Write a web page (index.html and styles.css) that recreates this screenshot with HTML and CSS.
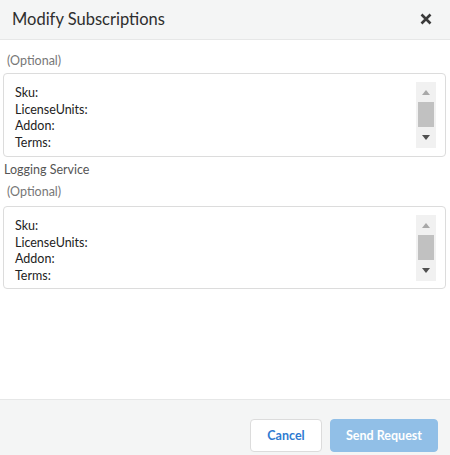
FILE: index.html
```html
<!DOCTYPE html>
<html>
<head>
<meta charset="utf-8">
<link rel="stylesheet" href="styles.css">
</head>
<body>
<div class="dialog">
  <div class="header">
    <div class="title">Modify Subscriptions</div>
    <svg class="close" width="12" height="12" viewBox="0 0 12 12"><path d="M1.5 1.5L10.5 10.5M10.5 1.5L1.5 10.5" stroke="#3a3a3a" stroke-width="2.6" stroke-linecap="butt"/></svg>
  </div>
  <div class="content">
    <div class="optional first">(Optional)</div>
    <div class="box">
      <div class="lines">
        <div>Sku:</div>
        <div>LicenseUnits:</div>
        <div>Addon:</div>
        <div>Terms:</div>
      </div>
      <div class="scrollbar">
        <div class="arrow up"></div>
        <div class="thumb"></div>
        <div class="arrow down"></div>
      </div>
    </div>
    <div class="section-label">Logging Service</div>
    <div class="optional second">(Optional)</div>
    <div class="box box2">
      <div class="lines">
        <div>Sku:</div>
        <div>LicenseUnits:</div>
        <div>Addon:</div>
        <div>Terms:</div>
      </div>
      <div class="scrollbar">
        <div class="arrow up"></div>
        <div class="thumb"></div>
        <div class="arrow down"></div>
      </div>
    </div>
  </div>
  <div class="footer">
    <button class="btn cancel">Cancel</button>
    <button class="btn send">Send Request</button>
  </div>
</div>
</body>
</html>
```

FILE: styles.css
```css
html, body {
  margin: 0;
  padding: 0;
}
body {
  font-family: Lato, "Open Sans", "Liberation Sans", sans-serif;
  color: #333;
  background: #fff;
}
.dialog {
  width: 450px;
  height: 455px;
  display: flex;
  flex-direction: column;
  overflow: hidden;
}
.header {
  height: 39px;
  flex: none;
  background: #f4f5f5;
  border-bottom: 1px solid #e6e7e7;
  display: flex;
  align-items: center;
  justify-content: space-between;
  padding: 0 18px 0 12px;
  box-sizing: content-box;
}
.title {
  font-size: 16.5px;
  color: #2e2e2e;
  margin-top: -2px;
}
.close {
  display: block;
  margin-top: -1px;
}
.content {
  flex: 1;
  padding: 0 4px 0 3px;
}
.optional {
  font-size: 12.5px;
  line-height: 18px;
  color: #777;
  padding-left: 4px;
}
.optional.first {
  margin-top: 12px;
}
.optional.second {
  margin-top: 4px;
}
.section-label {
  font-size: 12.5px;
  line-height: 18px;
  color: #555;
  margin-top: 4px;
  padding-left: 1px;
}
.box {
  margin-top: 3px;
  height: 84px;
  box-sizing: border-box;
  border: 1px solid #dcdcdc;
  border-radius: 4px;
  display: flex;
  justify-content: space-between;
  padding: 8px 9px 0 11px;
}
.box2 {
  margin-top: 5px;
  height: 83px;
}
.lines {
  font-size: 12.5px;
  line-height: 16.5px;
  color: #222;
  padding-top: 3px;
}
.scrollbar {
  width: 20px;
  height: 66px;
  background: #f1f1f1;
  display: flex;
  flex-direction: column;
  align-items: center;
}
.arrow {
  width: 0;
  height: 0;
  border-left: 4px solid transparent;
  border-right: 4px solid transparent;
}
.arrow.up {
  border-bottom: 5px solid #a8a8a8;
  margin-top: 8px;
}
.thumb {
  width: 16px;
  height: 25px;
  background: #c1c1c1;
  margin-top: 7px;
}
.arrow.down {
  border-top: 5px solid #505050;
  margin-top: 8px;
}
.footer {
  flex: none;
  height: 56px;
  background: #f4f5f5;
  border-top: 1px solid #e6e7e7;
  display: flex;
  justify-content: flex-end;
  align-items: flex-start;
  gap: 8px;
  padding: 19px 12px 0 0;
  box-sizing: border-box;
}
.btn {
  font-family: Lato, "Open Sans", "Liberation Sans", sans-serif;
  font-size: 12.5px;
  font-weight: bold;
  height: 33px;
  border-radius: 4px;
  cursor: pointer;
}
.cancel {
  width: 72px;
  background: #fff;
  border: 1px solid #dcdcdc;
  color: #2f7bd1;
}
.send {
  width: 108px;
  background: #91bfe7;
  border: 1px solid #91bfe7;
  color: #fff;
}
```
